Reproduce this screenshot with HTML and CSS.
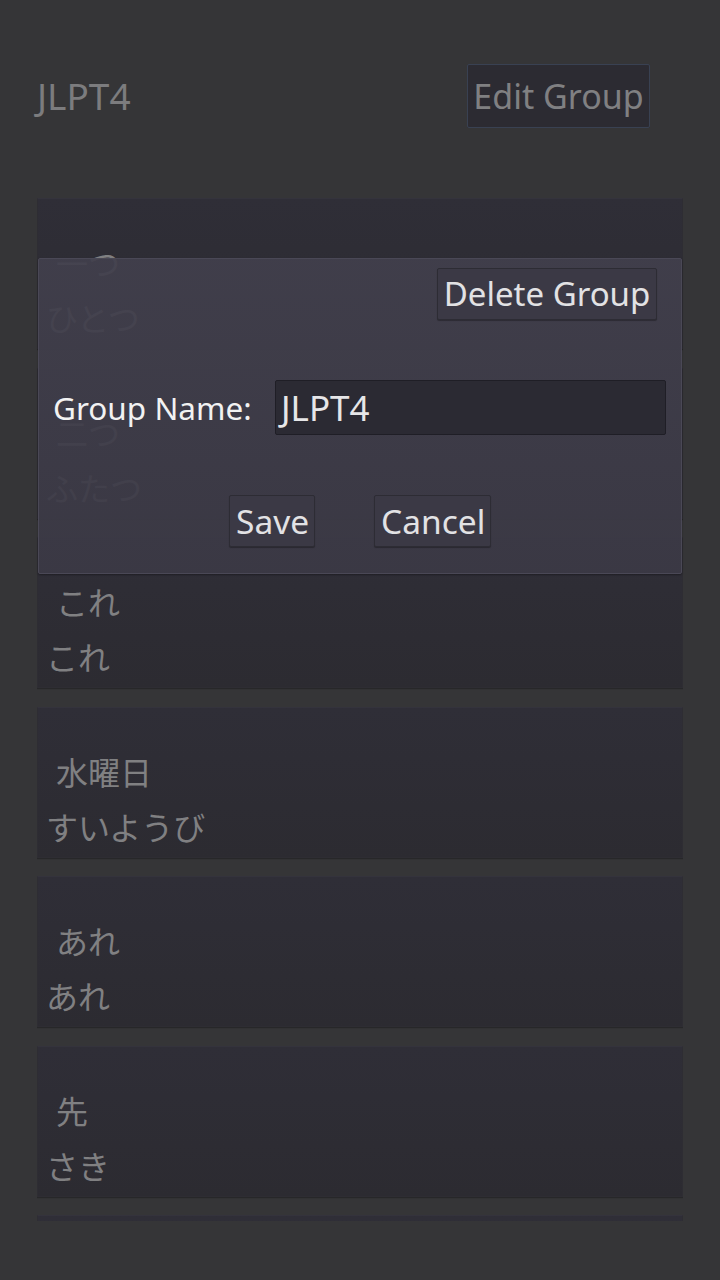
FILE: index.html
```html
<!DOCTYPE html>
<html lang="ja">
<head>
<meta charset="utf-8">
<title>JLPT4</title>
<link rel="stylesheet" href="styles.css">
</head>
<body>
<div class="screen">
  <header class="header">
    <div class="title">JLPT4</div>
    <button class="edit-btn">Edit Group</button>
  </header>
  <div class="list">
    <div class="card"><div class="word">一つ</div><div class="reading">ひとつ</div></div>
    <div class="card"><div class="word">二つ</div><div class="reading">ふたつ</div></div>
    <div class="card"><div class="word">これ</div><div class="reading">これ</div></div>
    <div class="card"><div class="word">水曜日</div><div class="reading">すいようび</div></div>
    <div class="card"><div class="word">あれ</div><div class="reading">あれ</div></div>
    <div class="card"><div class="word">先</div><div class="reading">さき</div></div>
    <div class="card"></div>
  </div>
  <div class="dialog">
    <div class="dialog-top">
      <button class="btn btn-delete">Delete Group</button>
    </div>
    <div class="field-row">
      <label class="field-label">Group Name:</label>
      <div class="field-input">JLPT4</div>
    </div>
    <div class="actions">
      <button class="btn btn-save">Save</button>
      <button class="btn btn-cancel">Cancel</button>
    </div>
  </div>
</div>
</body>
</html>
```

FILE: styles.css
```css
html, body {
  margin: 0;
  padding: 0;
  background: #353537;
}
body {
  font-family: "Noto Sans", "Noto Sans CJK JP", sans-serif;
  width: 720px;
  height: 1280px;
  overflow: hidden;
}
.screen {
  position: relative;
  width: 720px;
  height: 1280px;
}
.header {
  display: flex;
  justify-content: space-between;
  align-items: center;
  padding: 64px 70px 0 37px;
  height: 64px;
}
.title {
  color: #7c7c7e;
  font-size: 37px;
  line-height: 40px;
}
button {
  font-family: "Noto Sans", "Noto Sans CJK JP", sans-serif;
}
.edit-btn {
  box-sizing: border-box;
  width: 183px;
  height: 64px;
  padding: 0;
  background: #2c2b32;
  border: 1px solid #394152;
  border-radius: 2px;
  color: #808082;
  font-size: 34px;
  line-height: 40px;
}
.list {
  margin: 70px 37px 0 37px;
  height: 1023px;
  overflow: hidden;
  display: flex;
  flex-direction: column;
  gap: 18.5px;
}
.card {
  flex: 0 0 auto;
  box-sizing: border-box;
  height: 151px;
  padding-top: 37px;
  background: linear-gradient(#2f2e37, #2c2b31);
  border: 1px solid #2e2d33;
  border-top-color: #34333c;
  box-shadow: 0 1px 1px rgba(0,0,0,0.25);
  color: #808082;
  font-size: 32px;
  line-height: 55px;
}
.word {
  padding-left: 18px;
}
.reading {
  padding-left: 8px;
}
.dialog {
  position: absolute;
  left: 38px;
  top: 258px;
  width: 644px;
  height: 316px;
  box-sizing: border-box;
  background: linear-gradient(rgba(65,63,76,0.93), rgba(59,57,69,0.93));
  border: 1px solid #4a4856;
  border-radius: 2px;
  box-shadow: 0 1px 2px rgba(0,0,0,0.35);
  display: flex;
  flex-direction: column;
}
.dialog-top {
  display: flex;
  justify-content: flex-end;
  padding: 9px 24px 0 0;
}
.btn {
  box-sizing: border-box;
  height: 52px;
  padding: 0 6px;
  background: #3b3945;
  border: 1px solid #2d2c34;
  border-radius: 2px;
  box-shadow: 0 1px 1px rgba(0,0,0,0.3);
  color: #e2e2e4;
  font-size: 33.5px;
  line-height: 40px;
}
.btn-delete {
  width: 220px;
  padding: 0;
  font-size: 33px;
}
.field-row {
  display: flex;
  align-items: center;
  padding: 60px 15px 0 14px;
}
.field-label {
  color: #f2f2f2;
  font-size: 31.5px;
  line-height: 40px;
  width: 222px;
}
.field-input {
  box-sizing: border-box;
  flex: 1;
  height: 55px;
  padding: 0 5px;
  background: #2b2a33;
  border: 1px solid #1f1e26;
  border-radius: 2px;
  color: #e6e6e8;
  font-size: 35px;
  line-height: 53px;
}
.actions {
  display: flex;
  justify-content: center;
  gap: 59px;
  padding-top: 60px;
}
.btn-save { width: 86px; }
.btn-cancel { width: 117px; }
```
